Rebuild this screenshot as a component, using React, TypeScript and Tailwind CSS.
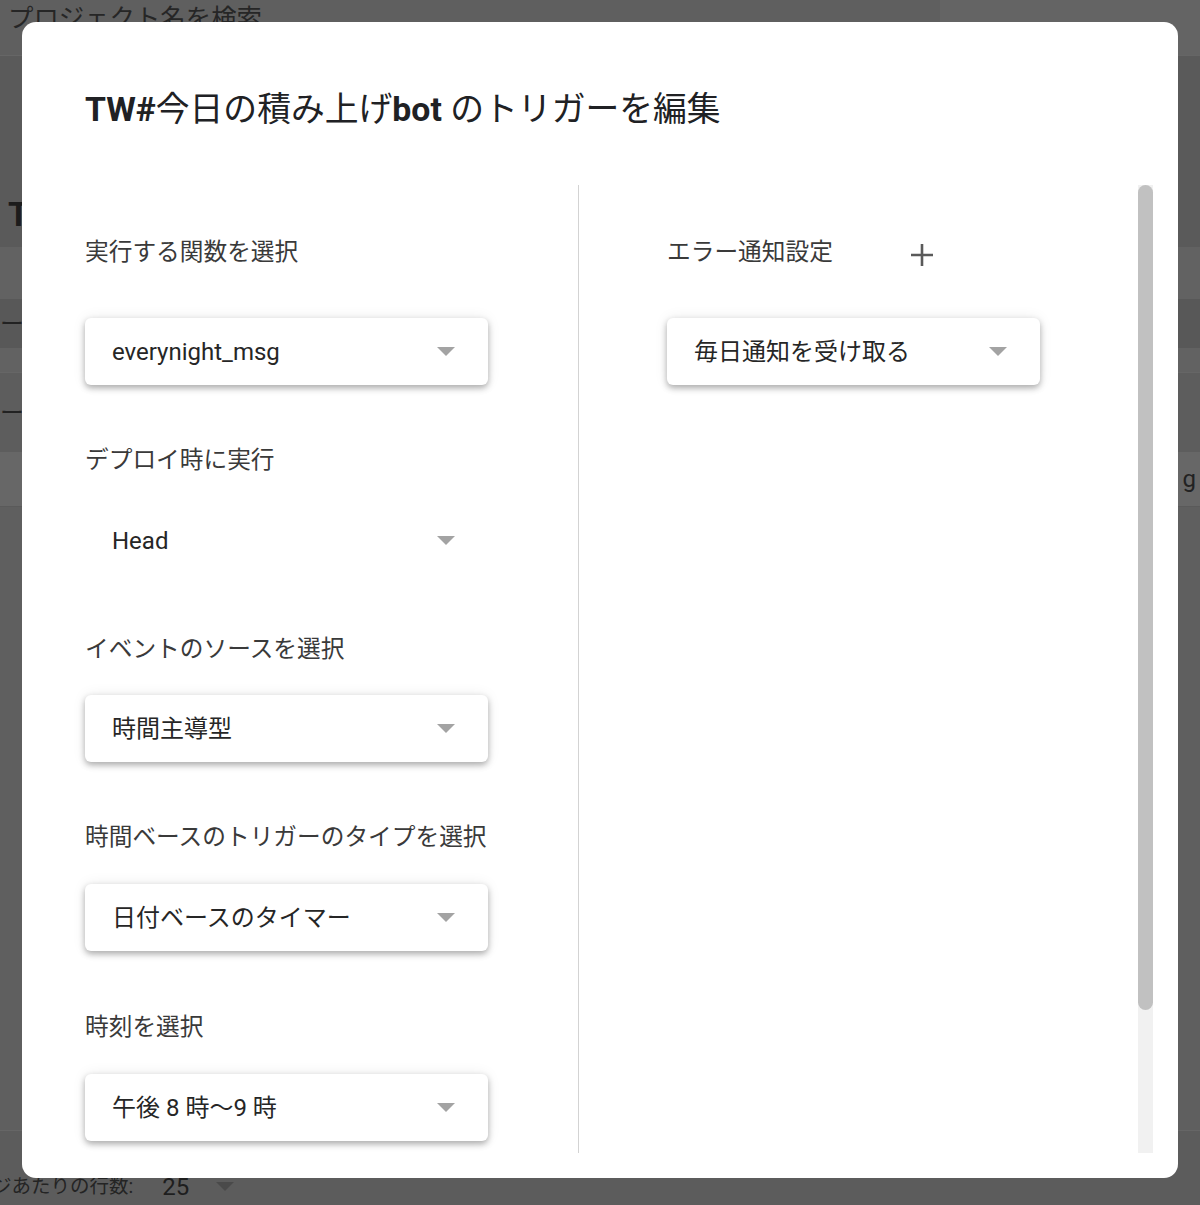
import React from "react";

const FONT = "font-['Roboto','Noto_Sans_CJK_JP',sans-serif]";

function Arrow() {
  return (
    <svg width="18" height="9" viewBox="0 0 18 9" className="shrink-0">
      <path d="M0 0 L18 0 L9 9 Z" fill="#a3a3a3" />
    </svg>
  );
}

function SelectBox({ value, width = "w-[403px]", boxed = true }: { value: string; width?: string; boxed?: boolean }) {
  return (
    <div
      className={`${width} h-[67px] flex items-center justify-between pl-[27px] pr-[33px] ${
        boxed
          ? "bg-white rounded-[6px] shadow-[0_3px_6px_rgba(0,0,0,0.3),0_0_14px_rgba(0,0,0,0.08)]"
          : ""
      }`}
    >
      <span className="text-[24px] leading-[32px] text-[#262626]">{value}</span>
      <Arrow />
    </div>
  );
}

function Label({ children, mb = "mb-[31px]" }: { children: React.ReactNode; mb?: string }) {
  return <div className={`h-[32px] leading-[32px] text-[23.7px] text-[#3a3a3a] ${mb} whitespace-nowrap`}>{children}</div>;
}

export default function App() {
  return (
    <div className={`relative w-[1200px] h-[1205px] overflow-hidden bg-[#5f5f5f] ${FONT}`}>
      {/* dimmed page behind */}
      <div className="flex flex-col w-full h-full">
        <div className="h-[56px] flex border-b border-[#666]">
          <div className="w-[940px] bg-[#5f5f5f] pl-[8px] text-[25.4px] leading-[32px] text-[#262626] pt-[2px]">
            プロジェクト名を検索
          </div>
          <div className="flex-1 bg-[#646464]" />
        </div>
        <div className="h-[192px] bg-[#5a5a5a] pl-[8px] pt-[138px]">
          <span className="text-[34px] leading-[40px] font-bold text-[#1c1c1c]">T</span>
        </div>
        <div className="h-[52px] bg-[#626262]" />
        <div className="h-[50px] bg-[#585858] flex items-center text-[24px] text-[#222]">ー</div>
        <div className="h-[25px] bg-[#626262] border-b border-[#666]" />
        <div className="h-[80px] bg-[#5d5d5d] flex items-center text-[24px] text-[#222]">ー</div>
        <div className="h-[55px] bg-[#676767] border-b border-[#5a5a5a] flex items-center justify-end pr-[4px] text-[24px] text-[#222]">
          g
        </div>
        <div className="h-[629px] bg-[#5f5f5f] border-b border-[#666]" />
        <div className="flex-1 bg-[#5c5c5c] flex items-center pt-[38px] text-[19.5px] text-[#242424]">
          <span className="-ml-[8px]">ジあたりの行数:</span>
          <span className="ml-[29px] text-[24px] text-[#1e1e1e]">25</span>
          <svg width="18" height="9" viewBox="0 0 18 9" className="ml-[27px]">
            <path d="M0 0 L18 0 L9 9 Z" fill="#4a4a4a" />
          </svg>
        </div>
      </div>

      {/* modal */}
      <div className="absolute left-[22px] top-[22px] w-[1156px] h-[1156px] bg-white rounded-[14px] overflow-hidden">
        <div className="pl-[63px] pt-[68px] h-[108px] text-[33.8px] leading-[40px] text-[#202124] whitespace-nowrap">
          <span className="font-bold">TW#</span>
          <span>今日の積み上げ</span>
          <span className="font-bold">bot</span>
          <span> のトリガーを編集</span>
        </div>
        <div className="mt-[55px] h-[968px] flex">
          <div className="w-[556px] pl-[63px] pt-[51px] overflow-hidden">
            <Label mb="mb-[50px]">実行する関数を選択</Label>
            <div className="mb-[59px]">
              <SelectBox value="everynight_msg" />
            </div>
            <Label>デプロイ時に実行</Label>
            <div className="mb-[59px]">
              <SelectBox value="Head" boxed={false} />
            </div>
            <Label mb="mb-[30px]">イベントのソースを選択</Label>
            <div className="mb-[59px]">
              <SelectBox value="時間主導型" />
            </div>
            <Label>時間ベースのトリガーのタイプを選択</Label>
            <div className="mb-[60px]">
              <SelectBox value="日付ベースのタイマー" />
            </div>
            <Label>時刻を選択</Label>
            <div>
              <SelectBox value="午後 8 時〜9 時" />
            </div>
          </div>
          <div className="w-px bg-[#d3d3d3]" />
          <div className="flex-1 pl-[88px] pt-[51px]">
            <div className="flex items-center mb-[50px]">
              <Label mb="mb-0">エラー通知設定</Label>
              <svg width="24" height="24" viewBox="0 0 24 24" className="ml-[77px] mt-[5px]">
                <path d="M12 1 V23 M1 12 H23" stroke="#5a5a5a" strokeWidth="2.6" />
              </svg>
            </div>
            <SelectBox value="毎日通知を受け取る" width="w-[373px]" />
          </div>
          <div className="w-[15px] mr-[25px] flex flex-col bg-[#f1f1f1]">
            <div className="h-[825px] bg-[#c1c1c1] rounded-[8px]" />
          </div>
        </div>
      </div>
    </div>
  );
}
